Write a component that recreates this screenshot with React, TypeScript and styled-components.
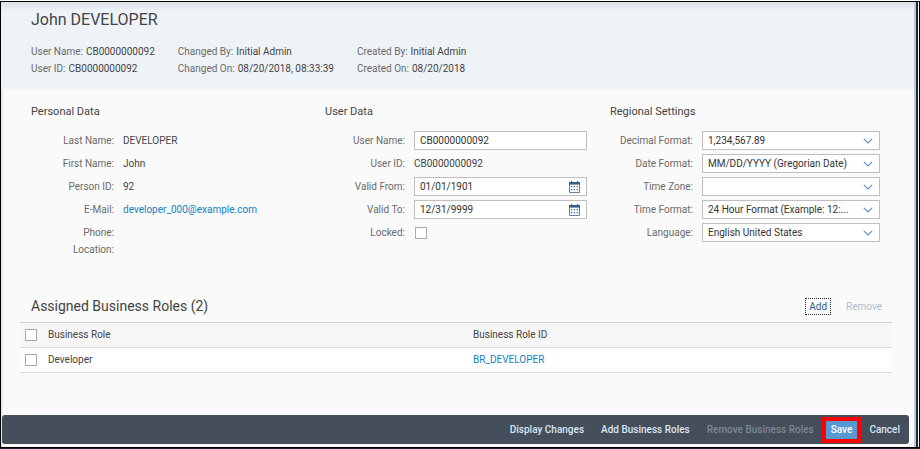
import React, { ReactNode } from "react";
import styled, { createGlobalStyle } from "styled-components";

const GlobalStyle = createGlobalStyle`
  *, *::before, *::after { box-sizing: border-box; }
  body {
    margin: 0;
    background: #fdfdfd;
    color: #444;
    font-family: Roboto, "Open Sans", sans-serif;
    font-size: 10px;
    line-height: 16px;
  }
  button, input, select { font: inherit; color: inherit; }
  h1, h2, h3, p, dl, dd { margin: 0; font-weight: 400; }
`;

const Window = styled.div`
  min-height: 100vh;
  padding-top: 1px;
  display: flex;
  flex-direction: column;
  border-bottom: 1px solid #1c232c;
`;

const Frame = styled.div`
  flex: 1;
  display: flex;
  border: 1px solid #000;
`;

const Page = styled.div`
  flex: 1;
  min-width: 0;
  display: flex;
  flex-direction: column;
  background: #fafafa;
  margin-right: 1px;
  border-right: 2px solid #1f2834;
  box-shadow: inset 3px 0 3px -2px #d9dcdf, inset -2px 0 0 #bccbdc;
`;

const Header = styled.header`
  padding: 8px 30px 12px;
  margin-right: 2px;
  background: linear-gradient(#dde1e4, #eef3f8 9px);
`;

const Title = styled.h1`
  font-size: 16px;
  line-height: 20px;
  margin-bottom: 13px;
`;

const Facts = styled.div`
  display: flex;
  gap: 23px;
`;

const FactGroup = styled.dl`
  line-height: 17px;
  white-space: nowrap;

  div { display: flex; gap: 3px; }
  dt { color: #6a6a6a; }
`;

const Forms = styled.main`
  display: grid;
  grid-template-columns: 294fr 285fr 270fr;
  padding: 14px 36px 0 30px;
`;

const FormColumn = styled.section<{ $gutter?: boolean }>`
  padding-right: ${(p) => (p.$gutter ? 23 : 0)}px;
`;

const FormTitle = styled.h3`
  font-size: 11px;
  line-height: 18px;
  margin-bottom: 8px;
`;

const Field = styled.div<{ $compact?: boolean }>`
  display: grid;
  grid-template-columns: 83px minmax(0, 1fr);
  column-gap: 9px;
  align-items: center;
  height: ${(p) => (p.$compact ? 16 : 23)}px;
  margin-top: ${(p) => (p.$compact ? -2 : 0)}px;
`;

const fieldLabel = `
  color: #6a6a6a;
  text-align: right;
  white-space: nowrap;
`;
const Label = styled.label`${fieldLabel}`;
const Caption = styled.span`${fieldLabel}`;

const UserField = styled(Field)`
  grid-template-columns: 80px minmax(0, 1fr);
`;

const Link = styled.a`
  color: #147fc2;
  text-decoration: none;
`;

const Control = styled.div`
  display: flex;
  align-items: center;
  position: relative;
  height: 19px;
  background: #fff;
  border: 1px solid #bfbfbf;
  color: #333;
`;

const TextInput = styled.input`
  flex: 1;
  min-width: 0;
  height: 17px;
  padding: 0 5px;
  border: 0;
  background: transparent;
  outline: none;
`;

const Select = styled.select`
  flex: 1;
  min-width: 0;
  height: 17px;
  padding: 0 24px 0 5px;
  border: 0;
  background: transparent;
  appearance: none;
  outline: none;
`;

const ArrowSlot = styled.span`
  position: absolute;
  right: 6px;
  top: 0;
  height: 17px;
  display: flex;
  align-items: center;
  pointer-events: none;
`;

const IconButton = styled.button`
  display: flex;
  padding: 0 6px;
  border: 0;
  background: transparent;
`;

const Checkbox = styled.input`
  appearance: none;
  display: block;
  width: 12px;
  height: 12px;
  margin: 0 1px;
  border: 1px solid #aaa;
  background: #fff;
`;

const Roles = styled.section`
  margin: 32px 24px 0 19px;
`;

const RolesBar = styled.div`
  display: flex;
  align-items: center;
  gap: 6px;
  height: 32px;
  padding: 0 1px 0 11px;
`;

const RolesTitle = styled.h2`
  flex: 1;
  font-size: 14px;
  line-height: 20px;
`;

const BarButton = styled.button<{ $focused?: boolean }>`
  height: 17px;
  line-height: 15px;
  padding: 0 ${(p) => (p.$focused ? 3 : 8)}px;
  border: 1px ${(p) => (p.$focused ? "dotted #333" : "solid transparent")};
  background: transparent;
  color: #346187;

  &:disabled { color: #a9bccc; }
`;

const Table = styled.table`
  width: 100%;
  border-collapse: collapse;
  table-layout: fixed;
  border-top: 1px solid #d0d0d0;

  th, td {
    height: 25px;
    padding: 0;
    text-align: left;
    font-weight: 400;
    border-bottom: 1px solid #dcdcdc;
  }
  thead tr { background: #f6f6f6; }
  tbody tr { background: #fff; }
  th:first-child, td:first-child { width: 28px; padding-left: 4px; }
  th:nth-child(2) { width: calc(50% - 11px); }
  th:nth-child(3), td:nth-child(3) { padding-left: 3px; }
`;

const Footer = styled.footer`
  display: flex;
  justify-content: flex-end;
  align-items: center;
  height: 29px;
  margin: auto 7px 3px 1px;
  padding-right: 9px;
  gap: 17px;
  border-radius: 3px;
  background: #444f5b;
`;

const FooterButton = styled.button<{ $primary?: boolean }>`
  height: 18px;
  margin: 0 ${(p) => (p.$primary ? -5 : 0)}px;
  padding: 0 ${(p) => (p.$primary ? 5 : 0)}px;
  border: 0;
  background: ${(p) => (p.$primary ? "#5899d2" : "transparent")};
  color: ${(p) => (p.$primary ? "#fff" : "#d8e6f3")};
  outline: ${(p) => (p.$primary ? "4px solid #fe0000" : "none")};
  font-weight: 500;
  white-space: nowrap;

  &:disabled { color: #7d8893; }
`;

const CalendarIcon = () => (
  <svg width="11" height="12" viewBox="0 0 11 12" aria-hidden="true">
    <path d="M.5 1.5h10v10H.5z" fill="#fff" stroke="#5a84ab" />
    <path d="M0 1h11v2.6H0z" fill="#2f5f8c" />
    <path d="M2 0h1v2H2zM8 0h1v2H8z" fill="#2f5f8c" />
    <path
      d="M2 5h1.3v1.3H2zM4.8 5h1.3v1.3H4.8zM7.6 5h1.3v1.3H7.6zM2 8h1.3v1.3H2zM4.8 8h1.3v1.3H4.8zM7.6 8h1.3v1.3H7.6z"
      fill="#3c6a94"
    />
  </svg>
);

const ChevronIcon = () => (
  <svg width="10" height="6" viewBox="0 0 10 6" aria-hidden="true">
    <path d="M.8.8 5 4.9 9.2.8" fill="none" stroke="#5d8bb5" strokeWidth="1.1" />
  </svg>
);

const Fact = ({ name, value }: { name: string; value: string }) => (
  <div>
    <dt>{name}:</dt>
    <dd>{value}</dd>
  </div>
);

const ReadOnly = ({ name, compact, children }: { name: string; compact?: boolean; children?: ReactNode }) => (
  <Field $compact={compact}>
    <Caption>{name}:</Caption>
    <span>{children}</span>
  </Field>
);

const DateField = ({ id, name, value }: { id: string; name: string; value: string }) => (
  <UserField>
    <Label htmlFor={id}>{name}:</Label>
    <Control>
      <TextInput id={id} defaultValue={value} />
      <IconButton type="button" aria-label={`Pick ${name}`}>
        <CalendarIcon />
      </IconButton>
    </Control>
  </UserField>
);

const settings = [
  { id: "decimal", name: "Decimal Format", value: "1,234,567.89" },
  { id: "date", name: "Date Format", value: "MM/DD/YYYY (Gregorian Date)" },
  { id: "zone", name: "Time Zone", value: "" },
  { id: "time", name: "Time Format", value: "24 Hour Format (Example: 12:..." },
  { id: "language", name: "Language", value: "English United States" },
];

export default function App() {
  return (
    <Window>
      <GlobalStyle />
      <Frame>
        <Page>
          <Header>
            <Title>John DEVELOPER</Title>
            <Facts>
              <FactGroup>
                <Fact name="User Name" value="CB0000000092" />
                <Fact name="User ID" value="CB0000000092" />
              </FactGroup>
              <FactGroup>
                <Fact name="Changed By" value="Initial Admin" />
                <Fact name="Changed On" value="08/20/2018, 08:33:39" />
              </FactGroup>
              <FactGroup>
                <Fact name="Created By" value="Initial Admin" />
                <Fact name="Created On" value="08/20/2018" />
              </FactGroup>
            </Facts>
          </Header>

          <Forms>
            <FormColumn>
              <FormTitle>Personal Data</FormTitle>
              <ReadOnly name="Last Name">DEVELOPER</ReadOnly>
              <ReadOnly name="First Name">John</ReadOnly>
              <ReadOnly name="Person ID">92</ReadOnly>
              <ReadOnly name="E-Mail">
                <Link href="mailto:developer_000@example.com">developer_000@example.com</Link>
              </ReadOnly>
              <ReadOnly name="Phone" />
              <ReadOnly name="Location" compact />
            </FormColumn>

            <FormColumn $gutter>
              <FormTitle>User Data</FormTitle>
              <UserField>
                <Label htmlFor="user-name">User Name:</Label>
                <Control>
                  <TextInput id="user-name" defaultValue="CB0000000092" />
                </Control>
              </UserField>
              <UserField>
                <Caption>User ID:</Caption>
                <span>CB0000000092</span>
              </UserField>
              <DateField id="valid-from" name="Valid From" value="01/01/1901" />
              <DateField id="valid-to" name="Valid To" value="12/31/9999" />
              <UserField>
                <Label htmlFor="locked">Locked:</Label>
                <Checkbox type="checkbox" id="locked" />
              </UserField>
            </FormColumn>

            <FormColumn>
              <FormTitle>Regional Settings</FormTitle>
              {settings.map((s) => (
                <Field key={s.id}>
                  <Label htmlFor={s.id}>{s.name}:</Label>
                  <Control>
                    <Select id={s.id} defaultValue={s.value}>
                      <option value={s.value}>{s.value}</option>
                    </Select>
                    <ArrowSlot>
                      <ChevronIcon />
                    </ArrowSlot>
                  </Control>
                </Field>
              ))}
            </FormColumn>
          </Forms>

          <Roles>
            <RolesBar>
              <RolesTitle>Assigned Business Roles (2)</RolesTitle>
              <BarButton type="button" $focused>
                Add
              </BarButton>
              <BarButton type="button" disabled>
                Remove
              </BarButton>
            </RolesBar>
            <Table>
              <thead>
                <tr>
                  <th>
                    <Checkbox type="checkbox" aria-label="Select all roles" />
                  </th>
                  <th>Business Role</th>
                  <th>Business Role ID</th>
                </tr>
              </thead>
              <tbody>
                <tr>
                  <td>
                    <Checkbox type="checkbox" aria-label="Select Developer" />
                  </td>
                  <td>Developer</td>
                  <td>
                    <Link href="#BR_DEVELOPER">BR_DEVELOPER</Link>
                  </td>
                </tr>
              </tbody>
            </Table>
          </Roles>

          <Footer>
            <FooterButton type="button">Display Changes</FooterButton>
            <FooterButton type="button">Add Business Roles</FooterButton>
            <FooterButton type="button" disabled>
              Remove Business Roles
            </FooterButton>
            <FooterButton type="button" $primary>
              Save
            </FooterButton>
            <FooterButton type="button">Cancel</FooterButton>
          </Footer>
        </Page>
      </Frame>
    </Window>
  );
}
